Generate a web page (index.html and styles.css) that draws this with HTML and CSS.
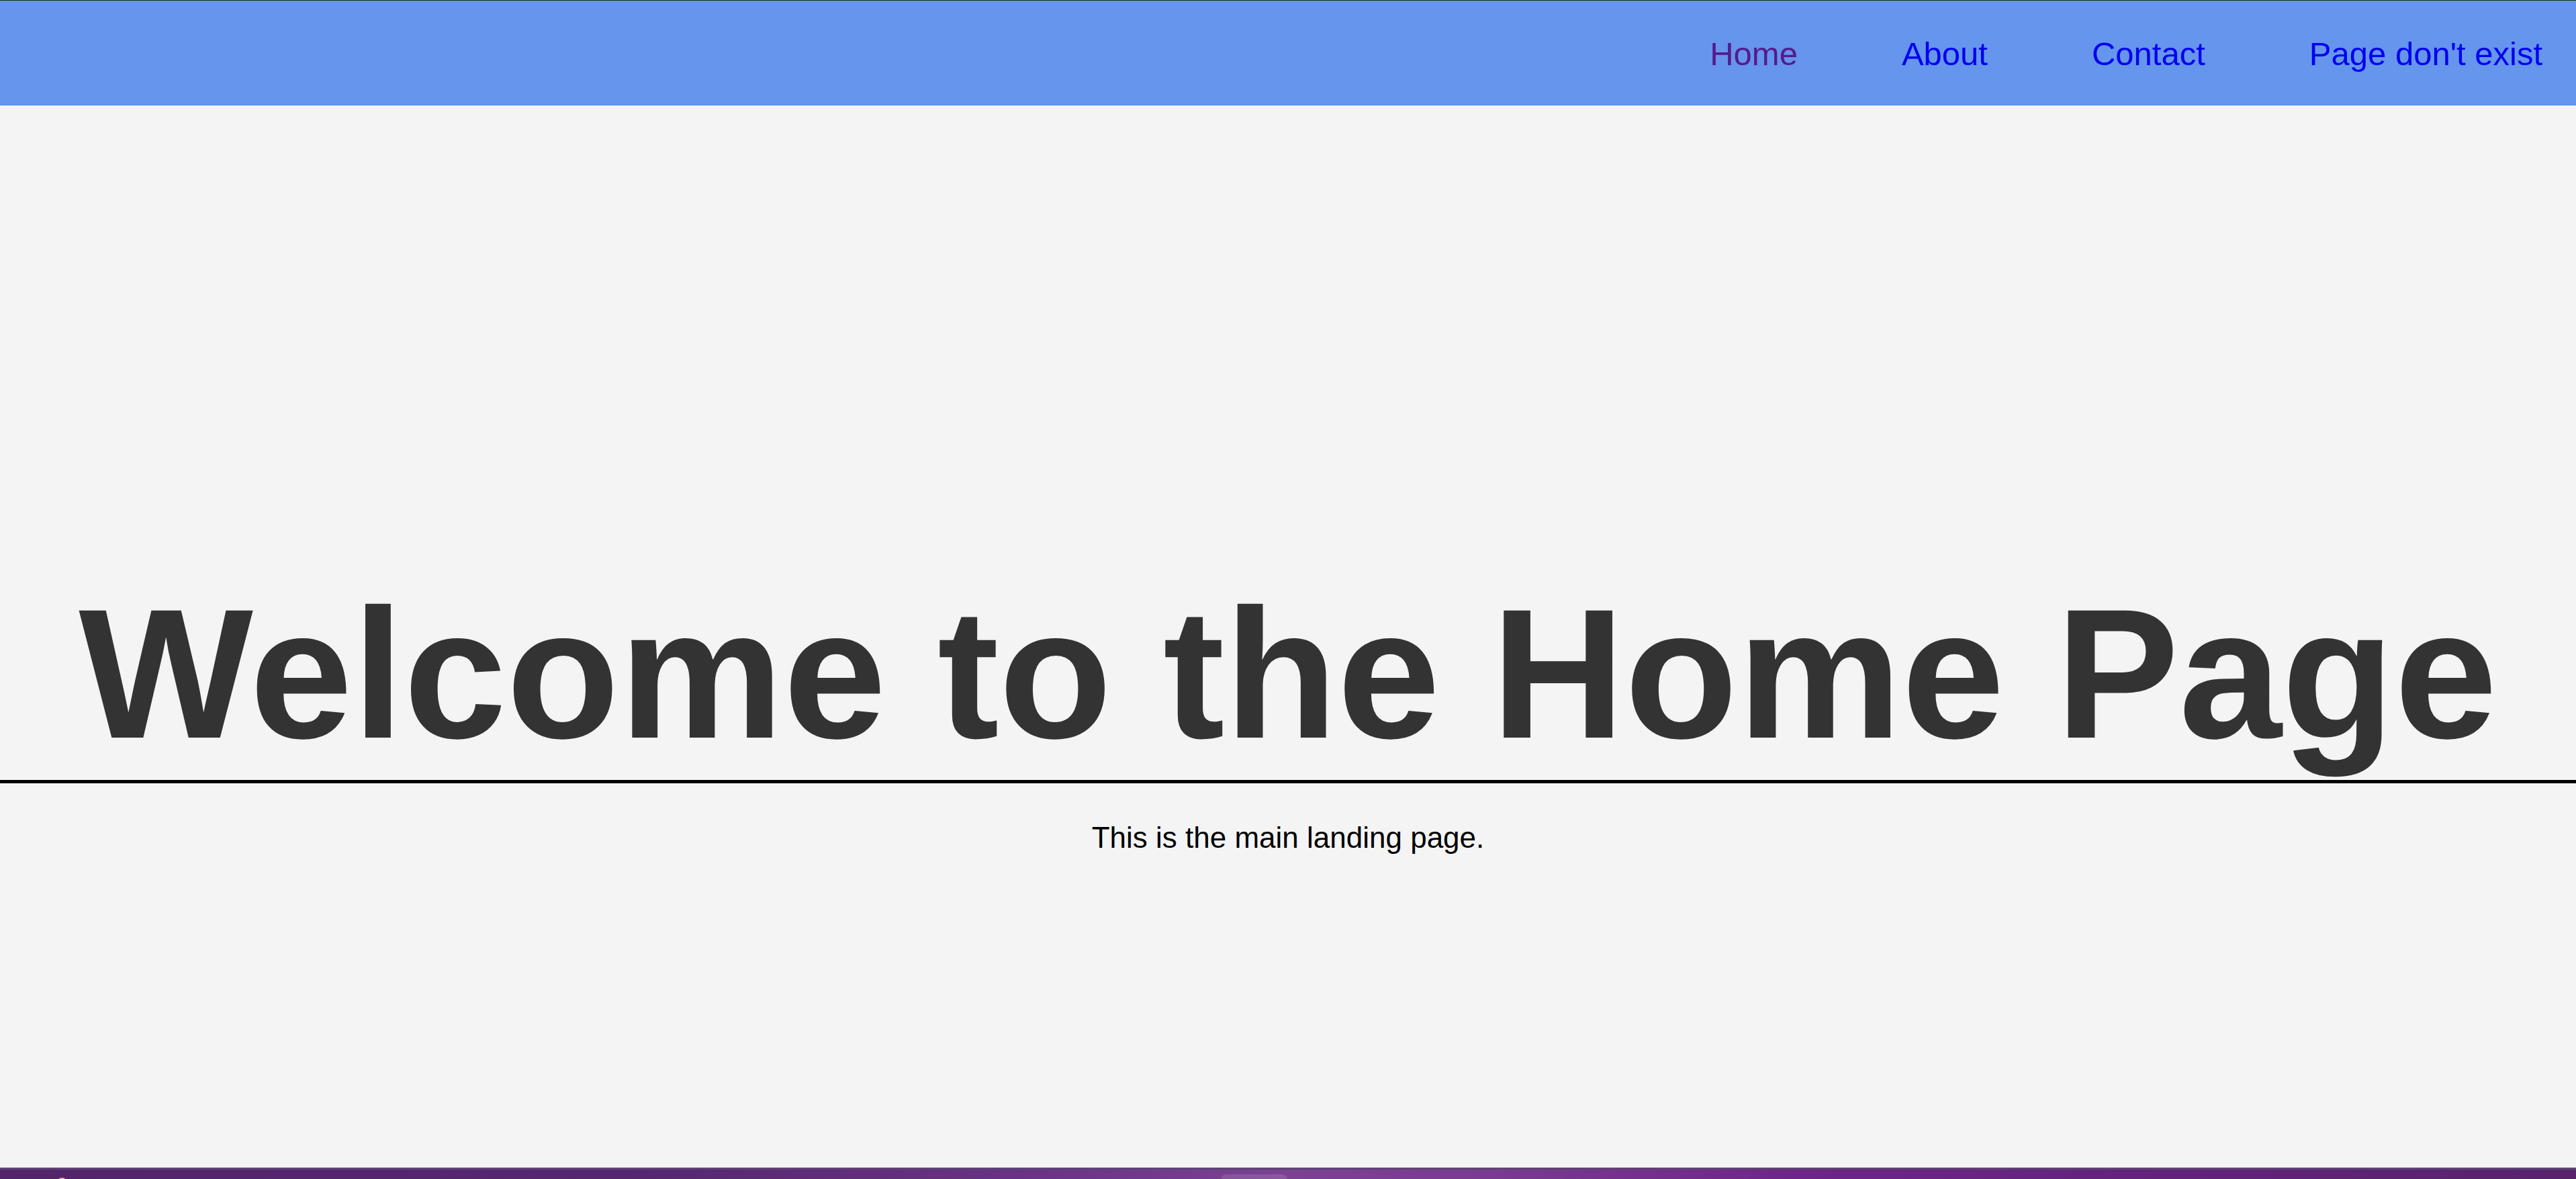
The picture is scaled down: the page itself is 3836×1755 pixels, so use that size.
FILE: index.html
```html
<!DOCTYPE html>
<html lang="en">
<head>
<meta charset="utf-8">
<title>Home</title>
<link rel="stylesheet" href="styles.css">
</head>
<body>
<nav class="topnav">
  <a class="nav-link visited" href="#">Home</a>
  <a class="nav-link" href="#">About</a>
  <a class="nav-link" href="#">Contact</a>
  <a class="nav-link" href="#">Page don't exist</a>
</nav>
<main class="content">
  <header class="hero">
    <h1 class="hero-title">Welcome to the Home Page</h1>
  </header>
  <hr class="divider">
  <p class="lead">This is the main landing page.</p>
</main>
<footer class="taskbar">
  <span class="tray-dot"></span>
  <span class="tray-tab"></span>
</footer>
</body>
</html>
```

FILE: styles.css
```css
html, body {
  margin: 0;
  padding: 0;
}

body {
  min-height: 100vh;
  display: flex;
  flex-direction: column;
  background: #f4f4f4;
  font-family: "Liberation Sans", Arial, sans-serif;
  overflow: hidden;
}

.topnav {
  box-sizing: border-box;
  height: 157px;
  display: flex;
  justify-content: flex-end;
  align-items: center;
  gap: 155px;
  padding: 2px 50px 0 0;
  background: #6595ec;
  border-top: 1px solid #17330f;
  border-bottom: 1px solid #5592f2;
}

.nav-link {
  font-size: 49px;
  color: #0000ee;
  text-decoration: none;
  line-height: normal;
}

.nav-link.visited {
  color: #551a8b;
}

.content {
  flex: 1;
  display: flex;
  flex-direction: column;
}

.hero {
  height: 1004px;
  display: flex;
  align-items: flex-end;
  justify-content: center;
}

.hero-title {
  margin: 0;
  font-size: 275px;
  font-weight: bold;
  line-height: normal;
  color: #333333;
  text-align: center;
  white-space: nowrap;
}

.divider {
  margin: 0;
  height: 0;
  border: 0;
  border-top: 5px solid #000000;
}

.lead {
  margin: 56px 0 0;
  font-size: 44px;
  line-height: normal;
  color: #000000;
  text-align: center;
}

.taskbar {
  box-sizing: border-box;
  height: 17px;
  display: flex;
  align-items: flex-start;
  border-top: 3px solid #5f4476;
  background: linear-gradient(90deg, #52256b 0%, #56276f 25%, #6a3384 40%, #7c4192 50%, #7a3a90 58%, #6e2488 70%, #62237a 85%, #57236b 100%);
}

.tray-dot {
  width: 15px;
  height: 15px;
  margin: 12px 0 0 85px;
  border-radius: 50%;
  background: #f0a0b0;
}

.tray-tab {
  width: 99px;
  height: 10px;
  margin: 7px 0 0 1718px;
  border-radius: 8px 8px 0 0;
  background: rgba(255, 255, 255, 0.12);
}
```
